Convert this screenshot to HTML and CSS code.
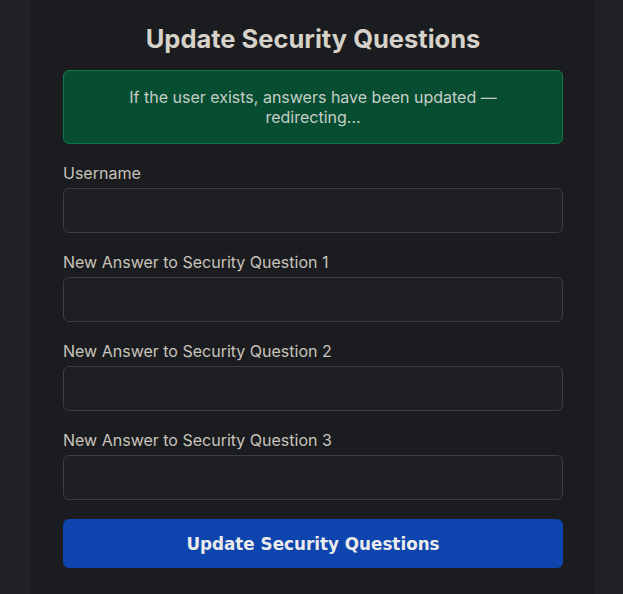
FILE: index.html
```html
<!DOCTYPE html>
<html lang="en">
<head>
<meta charset="utf-8">
<title>Update Security Questions</title>
<link rel="stylesheet" href="styles.css">
</head>
<body>
<main class="page">
  <section class="card">
    <h1 class="title">Update Security Questions</h1>
    <div class="alert">If the user exists, answers have been updated — redirecting...</div>
    <form class="form">
      <div class="field">
        <label class="label" for="u">Username</label>
        <input class="input" id="u" type="text">
      </div>
      <div class="field">
        <label class="label" for="a1">New Answer to Security Question 1</label>
        <input class="input" id="a1" type="text">
      </div>
      <div class="field">
        <label class="label" for="a2">New Answer to Security Question 2</label>
        <input class="input" id="a2" type="text">
      </div>
      <div class="field">
        <label class="label" for="a3">New Answer to Security Question 3</label>
        <input class="input" id="a3" type="text">
      </div>
      <button class="button" type="button">Update Security Questions</button>
    </form>
  </section>
</main>
</body>
</html>
```
FILE: styles.css
```css
html, body {
  margin: 0;
  padding: 0;
  background: #202124;
  height: 100%;
}
body {
  font-family: Inter, "Noto Sans", sans-serif;
  color: #cfcbc3;
}
.page {
  display: flex;
  justify-content: center;
  padding-left: 3px;
  min-height: 100%;
  box-sizing: border-box;
}
.card {
  width: 564px;
  box-sizing: border-box;
  background: #1b1c1f;
  padding: 22px 32px 26px;
  min-height: 100vh;
}
.title {
  margin: 0 0 14px;
  text-align: center;
  font-size: 25.5px;
  line-height: 34px;
  font-weight: 700;
  color: #d6d2ca;
}
.alert {
  background: #074d31;
  border: 1px solid #12774a;
  border-radius: 6px;
  padding: 16px;
  text-align: center;
  font-size: 16px;
  line-height: 20px;
  color: #c6cdc6;
  margin-bottom: 19px;
}
.form {
  display: flex;
  flex-direction: column;
  gap: 19px;
}
.field {
  display: flex;
  flex-direction: column;
  gap: 5px;
}
.label {
  font-size: 16px;
  line-height: 20px;
  color: #c8c4bc;
}
.input {
  height: 45px;
  box-sizing: border-box;
  background: #1e1f22;
  border: 1px solid #3c3d40;
  border-radius: 6px;
  color: #cfcbc3;
  padding: 0 12px;
  font: inherit;
  margin: 0;
}
.button {
  height: 49px;
  border: none;
  border-radius: 6px;
  background: #0d44ad;
  color: #ebebeb;
  font-family: "DejaVu Sans", sans-serif;
  font-weight: 700;
  font-size: 16.8px;
  margin: 0;
  cursor: pointer;
}
```
